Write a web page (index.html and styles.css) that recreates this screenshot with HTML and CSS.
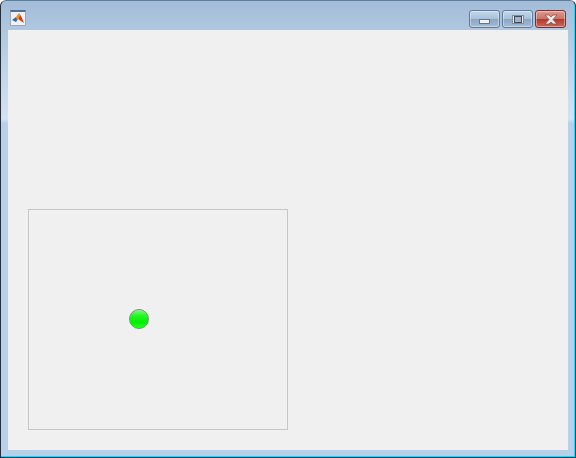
FILE: index.html
```html
<!DOCTYPE html>
<html lang="en">
<head>
    <meta charset="UTF-8">
    <title>Figure</title>
    <link rel="stylesheet" href="styles.css">
</head>
<body>
    <div class="window">
        <div class="titlebar">
            <div class="app-icon">
                <svg width="12" height="11" viewBox="0 0 12 11">
                    <path d="M0 7 L4 4 L6 6 L4 9 Z" fill="#3a66a8"/>
                    <path d="M4 4 L7 0 L8 2 L6.5 6.5 L5 7 Z" fill="#f0901e"/>
                    <path d="M7 0 L9 3 L12 10 L9 8 L6.5 6 L8 2 Z" fill="#cc3a18"/>
                </svg>
            </div>
            <div class="controls">
                <div class="ctl">
                    <span class="min-glyph"></span>
                </div>
                <div class="ctl">
                    <span class="max-glyph"></span>
                </div>
                <div class="ctl ctl-close">
                    <svg width="16" height="11" viewBox="0 0 16 11">
                        <path d="M2 1 L6 1 L8 3 L10 1 L14 1 L10 5.5 L14 10 L10 10 L8 8 L6 10 L2 10 L6 5.5 Z" fill="#e8e8e8" stroke="#7c4a48" stroke-width="0.7"/>
                    </svg>
                </div>
            </div>
        </div>
        <div class="content">
            <div class="panel">
                <div class="ball"></div>
            </div>
        </div>
    </div>
</body>
</html>
```

FILE: styles.css
```css
* {
    box-sizing: border-box;
}
body {
    margin: 0;
    background-color: #ffffff;
}
.window {
    width: 576px;
    height: 458px;
    display: flex;
    flex-direction: column;
    padding: 0 7px 7px 7px;
    background: linear-gradient(to bottom, #a3bcd8 0, #bcd2ea 60px, #d3e3f3 118px, #b8d1eb 122px, #b8d1eb 100%);
    border: 1px solid #26303a;
    border-top-color: #5f7d9b;
    border-radius: 6px 6px 0 0;
    box-shadow: inset -1px -1px 0 #2fd0ee;
}
.titlebar {
    height: 29px;
    flex: none;
    display: flex;
    align-items: flex-start;
    justify-content: space-between;
}
.app-icon {
    width: 16px;
    height: 16px;
    margin: 9px 0 0 2px;
    display: flex;
    align-items: center;
    justify-content: center;
    background-color: #eef1f5;
    border: 1px solid #9aa9b8;
    border-top: 2px solid #4f6f94;
}
.controls {
    display: flex;
    gap: 2px;
    margin: 9px 2px 0 0;
}
.ctl {
    width: 31px;
    height: 18px;
    display: flex;
    align-items: center;
    justify-content: center;
    border: 1px solid #5f7a96;
    border-radius: 3px;
    background: linear-gradient(to bottom, #c4d6e9 0, #a9c0d9 50%, #8aa6c4 52%, #a4bdd6 100%);
    box-shadow: inset 0 0 0 1px rgba(255, 255, 255, 0.4);
}
.ctl-close {
    border-color: #7a2f2c;
    background: linear-gradient(to bottom, #dc9a90 0, #cf7165 50%, #b7382c 52%, #c9685c 100%);
}
.min-glyph {
    width: 11px;
    height: 5px;
    margin-top: 4px;
    background-color: #f0f2f5;
    border: 1px solid #6b7682;
}
.max-glyph {
    width: 12px;
    height: 9px;
    display: flex;
    align-items: center;
    justify-content: center;
    background-color: #e6ebf1;
    border: 1px solid #7f8c9a;
}
.max-glyph::after {
    content: "";
    width: 6px;
    height: 5px;
    background-color: #9fb4ca;
    border: 1px solid #3f4a56;
}
.content {
    flex: 1;
    display: flex;
    align-items: flex-end;
    padding: 0 0 20px 20px;
    background-color: #f0f0f0;
}
.panel {
    position: relative;
    width: 260px;
    height: 221px;
    border: 1px solid #c6c6c6;
}
.ball {
    position: absolute;
    left: 100px;
    top: 99px;
    width: 20px;
    height: 20px;
    border-radius: 50%;
    border: 1px solid #6c9c6c;
    background: linear-gradient(to bottom, #7dff7d 0, #25f825 30%, #00f000 70%, #30fa30 100%);
}
```
